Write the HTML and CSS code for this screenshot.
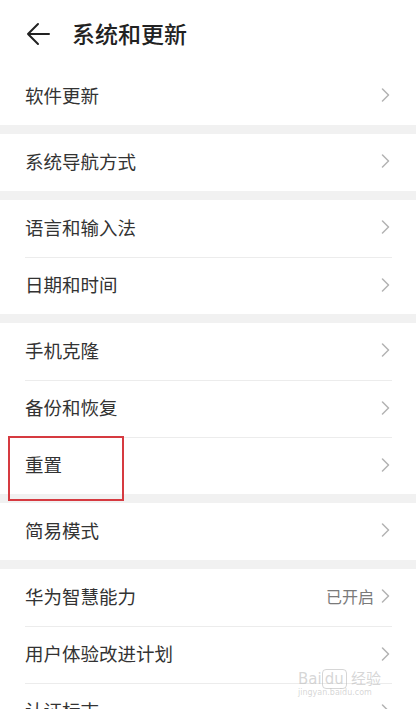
FILE: index.html
```html
<!DOCTYPE html>
<html lang="zh-CN">
<head>
  <meta charset="UTF-8" />
  <meta name="viewport" content="width=device-width, initial-scale=1.0"/>
  <title>系统和更新</title>
  <link rel="stylesheet" href="styles.css">
</head>
<body>
  <header class="topbar">
    <svg class="back" width="24" height="24" viewBox="0 0 24 24">
      <path d="M23 12H2M12 2L2 12l10 10" fill="none" stroke="#222" stroke-width="2" stroke-linecap="round" stroke-linejoin="round"/>
    </svg>
    <h1>系统和更新</h1>
  </header>

  <main class="settings">
    <!-- 分组 -->
    <section class="group">
      <div class="row"><span>软件更新</span><i class="chev"></i></div>
    </section>
    <section class="group">
      <div class="row"><span>系统导航方式</span><i class="chev"></i></div>
    </section>
    <section class="group">
      <div class="row"><span>语言和输入法</span><i class="chev"></i></div>
      <div class="row"><span>日期和时间</span><i class="chev"></i></div>
    </section>
    <section class="group">
      <div class="row"><span>手机克隆</span><i class="chev"></i></div>
      <div class="row"><span>备份和恢复</span><i class="chev"></i></div>
      <div class="row marked"><span>重置</span><i class="chev"></i></div>
    </section>
    <section class="group">
      <div class="row"><span>简易模式</span><i class="chev"></i></div>
    </section>
    <section class="group">
      <div class="row"><span>华为智慧能力</span><em class="value">已开启</em><i class="chev"></i></div>
      <div class="row"><span>用户体验改进计划</span><i class="chev"></i></div>
      <div class="row"><span>认证标志</span><i class="chev"></i></div>
    </section>
  </main>

  <div class="watermark">Bai<b>du</b> 经验<small>jingyan.baidu.com</small></div>
</body>
</html>
```

FILE: styles.css
```css
html, body {
  margin: 0;
  height: 709px;
  overflow: hidden;
}

body {
  font-family: "Noto Sans CJK SC", "Noto Sans", sans-serif;
  background: #f1f1f1;
  color: #333;
  width: 416px;
}

.topbar {
  height: 68px;
  background: #fff;
  display: flex;
  align-items: center;
  padding: 0 0 0 26px;
  box-sizing: border-box;
}

.topbar .back {
  margin-top: -1px;
}

.topbar h1 {
  margin: 0 0 0 22px;
  font-size: 23px;
  font-weight: 500;
  color: #222;
  line-height: 1;
  margin-top: -2px;
}

.settings {
  display: flex;
  flex-direction: column;
  gap: 9px;
}

.group {
  background: #fff;
  padding: 0 24px 0 25px;
}

.row {
  position: relative;
  height: 57px;
  display: flex;
  align-items: center;
  font-size: 18.5px;
  line-height: 1;
  padding-bottom: 3px;
  border-top: 1px solid #ececec;
  box-sizing: border-box;
}

.row:first-child {
  border-top: none;
}

.row span {
  flex: 1;
}

.value {
  font-style: normal;
  font-size: 16px;
  color: #7a7a7a;
  margin-right: 7px;
}

.chev {
  width: 9px;
  height: 14px;
  margin-right: 2px;
  background: no-repeat center / 9px 14px url("data:image/svg+xml,%3Csvg xmlns='http://www.w3.org/2000/svg' width='9' height='14' viewBox='0 0 9 14'%3E%3Cpath d='M1.5 1L7.5 7L1.5 13' fill='none' stroke='%23b3b3b3' stroke-width='1.5' stroke-linecap='round' stroke-linejoin='round'/%3E%3C/svg%3E");
}

.marked::after {
  content: "";
  position: absolute;
  left: -17px;
  top: -2px;
  width: 112px;
  height: 61px;
  border: 2px solid #d63a40;
}

.watermark {
  position: absolute;
  left: 298px;
  top: 672px;
  font-family: "DejaVu Sans", sans-serif;
  font-size: 15px;
  color: rgba(180, 180, 180, 0.55);
  line-height: 1;
}

.watermark b {
  font-weight: normal;
  border: 1px solid rgba(180, 180, 180, 0.55);
  border-radius: 4px;
  padding: 0 2px;
}

.watermark small {
  display: block;
  font-size: 8px;
  margin-top: 2px;
}
```
